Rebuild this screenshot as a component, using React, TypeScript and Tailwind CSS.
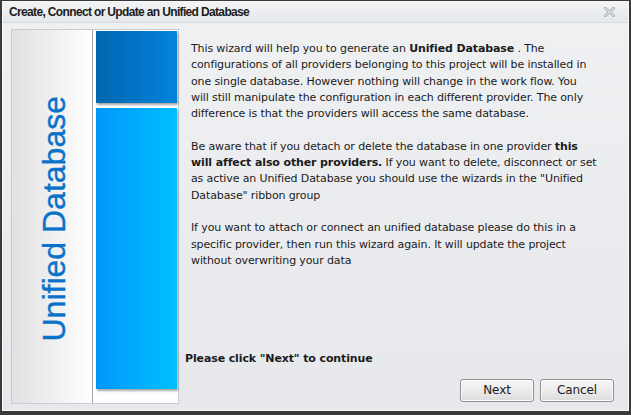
import React from 'react'

const font = { fontFamily: '"DejaVu Sans", Verdana, sans-serif' }

function CloseIcon() {
  return (
    <svg width="11" height="10" viewBox="0 0 11 10" className="block">
      <path d="M1 1 L10 9 M10 1 L1 9" stroke="#b4b8bd" strokeWidth="3" strokeLinecap="square" />
      <path d="M1 1 L10 9 M10 1 L1 9" stroke="#eef0f2" strokeWidth="1" />
    </svg>
  )
}

function Button({ label }: { label: string }) {
  return (
    <button className="w-[74px] h-[23px] rounded-[3px] border border-[#8e8f8f] bg-gradient-to-b from-[#f6f6f6] via-[#ebebeb] to-[#dcdcdc] text-[12px] text-[#1a1a1a] shadow-[inset_0_0_0_1px_#fcfcfc]">
      {label}
    </button>
  )
}

export default function App() {
  return (
    <div className="w-[631px] h-[415px] bg-[#3a3a3a] px-[2px] pt-[1px] pb-[4px]" style={font}>
      <div className="h-full flex flex-col bg-[#eceef0] border border-[#f7f8f9]">
        <div className="h-[21px] flex items-center justify-between pl-[6px] pr-[13px] bg-gradient-to-b from-[#f3f4f6] to-[#e4e7eb] border-b border-[#d6d9dd]">
          <span
            className="text-[12px] font-bold text-[#1b1b1b] tracking-[-0.65px]"
            style={{ fontFamily: '"Liberation Sans", Arial, sans-serif' }}
          >
            Create, Connect or Update an Unified Database
          </span>
          <CloseIcon />
        </div>
        <div className="flex-1 flex pl-[8px] pt-[6px] pb-[6px] bg-gradient-to-b from-[#eff0f2] to-[#e6e8eb]">
          <div className="w-[168px] h-[375px] shrink-0 border border-[#c9cdd1] flex bg-white">
            <div className="w-[81px] flex items-center justify-center bg-gradient-to-r from-[#e1e1e1] to-[#fefefe] border-r border-[#a6a6a6]">
              <span
                className="[writing-mode:vertical-rl] rotate-180 text-[32px] text-[#0a72c8] leading-none ml-[4px] mt-[4px] [-webkit-text-stroke:0.4px_#0a72c8]"
                style={{ fontFamily: '"Liberation Sans", Arial, sans-serif' }}
              >
                Unified Database
              </span>
            </div>
            <div className="flex-1 flex flex-col pl-[3px] pr-[1px] pt-[1px] gap-[5px]">
              <div className="h-[72px] bg-gradient-to-r from-[#0065ae] to-[#0483dd] shadow-[1px_2px_2px_rgba(0,0,0,0.35)]" />
              <div className="h-[281px] bg-gradient-to-r from-[#0096fc] to-[#00c0ff] shadow-[1px_2px_2px_rgba(0,0,0,0.35)]" />
            </div>
          </div>
          <div className="flex-1 flex flex-col pl-[12px] pr-[14px] pt-[12px] text-[11px] leading-[16.3px] tracking-[-0.12px] text-[#1b1b1b] whitespace-nowrap">
            <p>
              This wizard will help you to generate an <b>Unified Database</b> . The<br />
              configurations of all providers belonging to this project will be installed in<br />
              one single database. However nothing will change in the work flow. You<br />
              will still manipulate the configuration in each different provider. The only<br />
              difference is that the providers will access the same database.
            </p>
            <p className="mt-[16.3px]">
              Be aware that if you detach or delete the database in one provider <b>this</b><br />
              <b>will affect also other providers.</b> If you want to delete, disconnect or set<br />
              as active an Unified Database you should use the wizards in the "Unified<br />
              Database" ribbon group
            </p>
            <p className="mt-[16.3px]">
              If you want to attach or connect an unified database please do this in a<br />
              specific provider, then run this wizard again. It will update the project<br />
              without overwriting your data
            </p>
            <div className="flex-1" />
            <p className="font-bold -ml-[6px]">Please click "Next" to continue</p>
            <div className="flex justify-end gap-[6px] mt-[12px] mb-[2px]">
              <Button label="Next" />
              <Button label="Cancel" />
            </div>
          </div>
        </div>
      </div>
    </div>
  )
}
